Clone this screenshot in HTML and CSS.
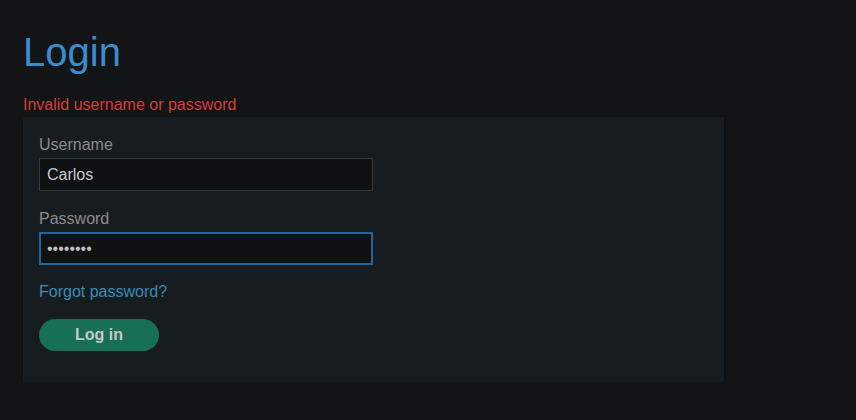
FILE: index.html
```html
<!DOCTYPE html>
<html lang="en">
<head>
<meta charset="utf-8">
<title>Login</title>
<link rel="stylesheet" href="styles.css">
</head>
<body>
<main class="page">
  <h1 class="title">Login</h1>
  <p class="error">Invalid username or password</p>
  <form class="panel">
    <label class="label" for="username">Username</label>
    <input class="input" id="username" type="text" value="Carlos">
    <label class="label" for="password">Password</label>
    <input class="input input-focus" id="password" type="password" value="password">
    <a class="forgot" href="#">Forgot password?</a>
    <button class="btn" type="button">Log in</button>
  </form>
</main>
</body>
</html>
```
FILE: styles.css
```css
html, body {
  margin: 0;
  padding: 0;
  background: #121416;
  font-family: "Liberation Sans", Arial, sans-serif;
}
.page {
  padding: 28px 0 0 23px;
  width: 701px;
}
.title {
  margin: 0;
  font-weight: normal;
  font-size: 40px;
  line-height: 48px;
  color: #3b8ccb;
}
.error {
  margin: 19px 0 2px;
  font-size: 16px;
  line-height: 20px;
  color: #d23f3a;
}
.panel {
  display: flex;
  flex-direction: column;
  align-items: flex-start;
  background: #171c20;
  padding: 18px 16px 31px;
  box-shadow: 0 0 4px rgba(0,0,0,0.4);
}
.label {
  font-size: 16px;
  line-height: 20px;
  color: #8c8c8c;
  margin-bottom: 3px;
}
.input {
  box-sizing: border-box;
  width: 334px;
  height: 33px;
  margin: 0 0 18px;
  padding: 0 7px;
  background: #0f1112;
  border: 1px solid #34393c;
  color: #c9c9c9;
  font-family: "Liberation Sans", Arial, sans-serif;
  font-size: 16px;
  outline: none;
}
.input-focus {
  border: 2px solid #1b67a0;
  padding: 0 6px;
  margin-bottom: 17px;
  color: #bdbdbd;
}
.forgot {
  font-size: 16px;
  line-height: 20px;
  color: #3a8cb6;
  text-decoration: none;
}
.btn {
  margin-top: 17px;
  width: 120px;
  height: 32px;
  border: none;
  border-radius: 16px;
  background: #166f56;
  color: #c7c7c7;
  font-family: "Liberation Sans", Arial, sans-serif;
  font-weight: bold;
  font-size: 16px;
}
```
